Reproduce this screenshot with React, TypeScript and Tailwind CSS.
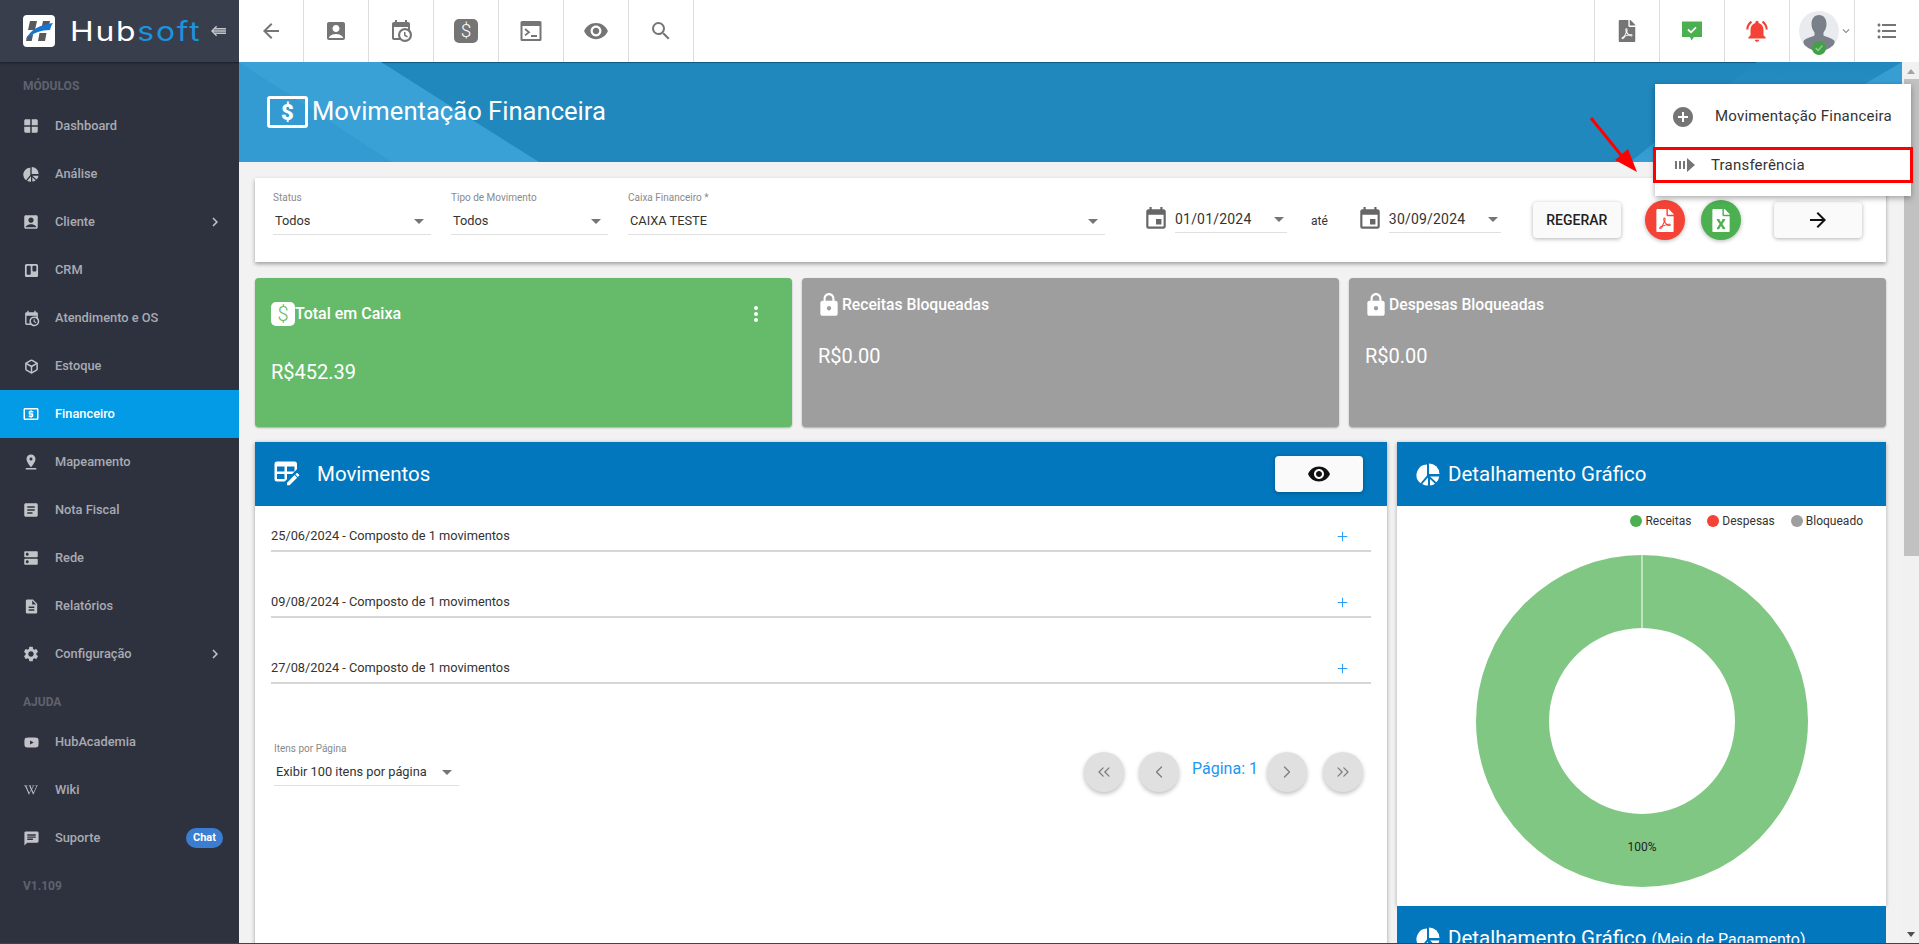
import { ChevronLeft, ChevronRight, ChevronsLeft, ChevronsRight, Plus, Box } from 'lucide-react';
import { FaTrello, FaYoutube, FaWikipediaW, FaFilePdf, FaFileExcel } from 'react-icons/fa';
import {
  MdWindow, MdAccountBox, MdLocalAtm, MdPinDrop, MdArticle, MdDns, MdDescription, MdSettings, MdChat,
  MdArrowBack, MdVisibility, MdSearch, MdNotificationsActive, MdFormatListBulleted, MdKeyboardArrowDown,
  MdChevronRight, MdEvent, MdLock, MdMoreVert, MdAddCircle, MdArrowForward,
} from 'react-icons/md';

const CalendarClock = ({ className }: { className?: string }) => (
  <svg viewBox="0 0 24 24" fill="currentColor" className={className}>
    <path d="M15,13H16.5V15.82L18.94,17.23L18.19,18.53L15,16.69V13M19,8H5V19H9.67C9.24,18.09 9,17.07 9,16A7,7 0 0,1 16,9C17.07,9 18.09,9.24 19,9.67V8M5,21C3.89,21 3,20.1 3,19V5C3,3.89 3.89,3 5,3H6V1H8V3H16V1H18V3H19A2,2 0 0,1 21,5V11.1C22.24,12.36 23,14.09 23,16A7,7 0 0,1 16,23C14.09,23 12.36,22.24 11.1,21H5M16,11.15A4.85,4.85 0 0,0 11.15,16C11.15,18.68 13.32,20.85 16,20.85A4.85,4.85 0 0,0 20.85,16C20.85,13.32 18.68,11.15 16,11.15Z" />
  </svg>
);

const TableEdit = ({ className }: { className?: string }) => (
  <svg viewBox="0 0 24 24" fill="currentColor" className={className}>
    <path d="M21.7,13.35L20.7,14.35L18.65,12.3L19.65,11.3C19.86,11.09 20.21,11.09 20.42,11.3L21.7,12.58C21.91,12.79 21.91,13.14 21.7,13.35M12,18.94L18.06,12.88L20.11,14.93L14.06,21H12V18.94M4,2H18A2,2 0 0,1 20,4V8.17L16.17,12H12V16.17L10.17,18H4A2,2 0 0,1 2,16V4A2,2 0 0,1 4,2M4,6V10H10V6H4M12,6V10H18V6H12M4,12V16H10V12H4Z" />
  </svg>
);

const TerminalIcon = () => (
  <svg viewBox="0 0 24 24" className="w-[24px] h-[24px] text-[#757575]">
    <path fill="currentColor" fillRule="evenodd" d="M3 2h18a1.5 1.5 0 0 1 1.5 1.5v17A1.5 1.5 0 0 1 21 22H3a1.5 1.5 0 0 1-1.5-1.5v-17A1.5 1.5 0 0 1 3 2zm.5 5v13h17V7h-17z" />
    <path d="M6 10l4 3.2-4 3.2M12 17h6" fill="none" stroke="currentColor" strokeWidth="1.8" />
  </svg>
);

const PieCut = ({ className }: { className?: string }) => (
  <svg viewBox="0 0 24 24" fill="currentColor" className={className}>
    <path d="M13 1.500a10.500 10.500 0 0 1 10.500 10.500H13z" />
    <path d="M11 2.500a10.500 10.500 0 0 0-6.500 18.700L11 13.500z" />
    <path d="M12 15.500l-5.800 6.500a10.500 10.500 0 0 0 5.800 1.500z" />
    <path d="M14 14.500h9.300a10.500 10.500 0 0 1-3 5.800z" />
    <path d="M14 17l5 4.700a10.500 10.500 0 0 1-5 1.700z" />
  </svg>
);

const Logo = () => (
  <svg viewBox="0 0 32 32" className="w-[32px] h-[32px] shrink-0">
    <rect width="32" height="32" rx="4" fill="#fff" />
    <path d="M7 6h7l-2 9H5zM4 21.500l6.200-2.500L8.700 26H3zM20 6h7l-1.500 7h-7zM16.500 18h7L22 26h-7z" fill="#58595b" />
    <path d="M3 24C8 14 17 10 30 8c-2 3-2.500 5-3 7C18 15 10 18 3 24z" fill="#1476d2" />
  </svg>
);

const NavItem = ({ icon, label, active, chevron, badge }: { icon: React.ReactNode; label: string; active?: boolean; chevron?: boolean; badge?: string }) => (
  <div className={`h-[48px] flex items-center pl-[21px] pr-[16px] text-[12.8px] font-medium ${active ? 'bg-[#039be5] text-white' : 'text-[#a9abb2]'}`}>
    <span className={`w-[20px] flex justify-center ${active ? 'text-white' : 'text-[#c2c3c8]'}`}>{icon}</span>
    <span className="ml-[14px] flex-1">{label}</span>
    {chevron && <MdChevronRight className="w-[18px] h-[18px] text-[#c2c3c8] mr-[-1px]" />}
    {badge && <span className="h-[20px] w-[37px] rounded-full bg-[#3b7dd0] text-white text-[11px] font-bold flex items-center justify-center">{badge}</span>}
  </div>
);

const SectionLabel = ({ children }: { children: string }) => (
  <div className="h-[40px] flex items-end pb-[7px] pl-[23px] text-[12px] font-bold text-[#5f626d]">{children}</div>
);

const Sidebar = () => (
  <aside className="w-[239px] shrink-0 bg-[#2e323f] flex flex-col">
    <div className="h-[62px] bg-[#393e4c] flex items-center pl-[23px] shadow-[0_1px_2px_rgba(0,0,0,0.4)]">
      <Logo />
      <span className="ml-[15px] origin-left scale-x-[1.18] text-[27px] leading-none font-normal tracking-[1.5px] [font-family:Inter,sans-serif] text-white">
        Hub<span className="text-[#1a94dc]">soft</span>
      </span>
      <svg viewBox="0 0 16 12" className="ml-[30px] w-[15px] h-[12px] text-[#c5c7cc]" fill="none" stroke="currentColor" strokeWidth="1.4">
        <path d="M6 1L1 6l5 5M3 3.6h13M1.5 6h14.5M3 8.4h13" />
      </svg>
    </div>
    <SectionLabel>MÓDULOS</SectionLabel>
    <NavItem icon={<MdWindow className="w-[18px] h-[18px]" />} label="Dashboard" />
    <NavItem icon={<PieCut className="w-[16px] h-[16px]" />} label="Análise" />
    <NavItem icon={<MdAccountBox className="w-[18px] h-[18px]" />} label="Cliente" chevron />
    <NavItem icon={<FaTrello className="w-[15px] h-[15px]" />} label="CRM" />
    <NavItem icon={<CalendarClock className="w-[17px] h-[17px]" />} label="Atendimento e OS" />
    <NavItem icon={<Box className="w-[15px] h-[15px]" strokeWidth={2.4} />} label="Estoque" />
    <NavItem icon={<MdLocalAtm className="w-[18px] h-[18px]" />} label="Financeiro" active />
    <NavItem icon={<MdPinDrop className="w-[18px] h-[18px]" />} label="Mapeamento" />
    <NavItem icon={<MdArticle className="w-[18px] h-[18px]" />} label="Nota Fiscal" />
    <NavItem icon={<MdDns className="w-[18px] h-[18px]" />} label="Rede" />
    <NavItem icon={<MdDescription className="w-[17px] h-[17px]" />} label="Relatórios" />
    <NavItem icon={<MdSettings className="w-[18px] h-[18px]" />} label="Configuração" chevron />
    <SectionLabel>AJUDA</SectionLabel>
    <NavItem icon={<FaYoutube className="w-[15px] h-[15px]" />} label="HubAcademia" />
    <NavItem icon={<FaWikipediaW className="w-[14px] h-[14px]" />} label="Wiki" />
    <NavItem icon={<MdChat className="w-[17px] h-[17px]" />} label="Suporte" badge="Chat" />
    <div className="mt-[15px] pl-[23px] text-[12px] font-bold text-[#5f626d]">V1.109</div>
  </aside>
);

const Cell = ({ children, right }: { children: React.ReactNode; right?: boolean }) => (
  <div className={`w-[65px] h-full flex items-center justify-center border-[#dddddd] text-[#757575] ${right ? 'border-l' : 'border-r'}`}>
    {children}
  </div>
);

const Topbar = () => (
  <header className="h-[62px] bg-white flex justify-between shrink-0">
    <div className="flex h-full">
      <Cell><MdArrowBack className="w-[24px] h-[24px]" /></Cell>
      <Cell><MdAccountBox className="w-[24px] h-[24px]" /></Cell>
      <Cell><CalendarClock className="w-[24px] h-[24px]" /></Cell>
      <Cell>
        <span className="w-[24px] h-[24px] rounded-[5px] bg-[#757575] text-white text-[19px] font-light flex items-center justify-center">$</span>
      </Cell>
      <Cell><TerminalIcon /></Cell>
      <Cell><MdVisibility className="w-[26px] h-[26px]" /></Cell>
      <Cell><MdSearch className="w-[24px] h-[24px]" /></Cell>
    </div>
    <div className="flex h-full">
      <Cell right><FaFilePdf className="w-[18px] h-[22px]" /></Cell>
      <Cell right>
        <svg viewBox="0 0 22 22" className="w-[22px] h-[22px]">
          <path d="M1 1.5h20v15.5h-8l-2.5 3.5-1.5-3.500H1z" fill="#4caf50" />
          <path d="M7 9.500l3 2.800 5-5" fill="none" stroke="#fff" strokeWidth="1.800" />
        </svg>
      </Cell>
      <Cell right><MdNotificationsActive className="w-[26px] h-[26px] text-[#f44336]" /></Cell>
      <Cell right>
        <div className="relative flex items-center ml-[8px]">
          <div className="relative w-[40px] h-[40px] rounded-full bg-[#e9ebee] overflow-hidden">
            <svg viewBox="0 0 40 40" className="w-[40px] h-[40px]">
              <path d="M20 4c5 0 7.500 4 7.500 9 0 3-1 6-3 8.500v3c4 2 9 2.500 11 5.500v11H4.500V30c2-3 7-3.500 11-5.500v-3c-2-2.500-3-5.500-3-8.500 0-5 2.500-9 7.500-9z" fill="#7a808a" />
            </svg>
          </div>
          <span className="absolute left-[13px] top-[30px] w-[14px] h-[14px] rounded-full bg-[#43a047] flex items-center justify-center">
            <svg viewBox="0 0 12 12" className="w-[10px] h-[10px]"><path d="M2 6l3 3 5-6" fill="none" stroke="#8fcf92" strokeWidth="1.500" /></svg>
          </span>
          <MdKeyboardArrowDown className="w-[14px] h-[14px] text-[#888]" />
        </div>
      </Cell>
      <Cell right><MdFormatListBulleted className="w-[24px] h-[24px]" /></Cell>
    </div>
  </header>
);

const Banner = () => (
  <div className="relative h-[100px] bg-[#2088bd] overflow-hidden flex items-center pl-[28px] shadow-[inset_0_1px_1px_rgba(0,40,70,0.5)]">
    <svg viewBox="0 0 1663 100" preserveAspectRatio="none" className="absolute inset-0 w-full h-full">
      <defs>
        <linearGradient id="bandFade" x1="0" y1="0" x2="0" y2="1">
          <stop offset="0" stopColor="#2088bd" />
          <stop offset="1" stopColor="#379ed4" />
        </linearGradient>
      </defs>
      <polygon points="0,0 142,0 300,100 0,100" fill="#39a1d6" />
      <polygon points="0,0 153,100 0,100" fill="#339bd1" />
      <polygon points="1391,100 1518,0 1663,0 1663,100" fill="url(#bandFade)" />
      <polygon points="1493,100 1663,0 1663,100" fill="#379ed4" />
    </svg>
    <span className="relative w-[41px] h-[32px] rounded-[3px] border-[3px] border-white text-white text-[22px] font-black flex items-center justify-center">$</span>
    <h1 className="relative ml-[4px] mb-[2px] text-[25.6px] text-white">Movimentação Financeira</h1>
  </div>
);

const SelectField = ({ label, value, width, className }: { label: string; value: string; width: string; className?: string }) => (
  <div className={`flex flex-col ${width} ${className ?? ''}`}>
    <span className="h-[12px] text-[10px] leading-[12px] text-[#8a8a8a]">{label}</span>
    <div className="h-[31px] pt-[4px] flex items-center justify-between pl-[2px] pr-[7px] border-b border-[#e0e0e0] text-[12.8px] text-[#333]">
      <span>{value}</span>
      <span className="w-0 h-0 border-x-[5px] border-x-transparent border-t-[5px] border-t-[#757575]" />
    </div>
  </div>
);

const DateField = ({ value }: { value: string }) => (
  <div className="flex items-start mt-[14px]">
    <MdEvent className="w-[26px] h-[26px] text-[#666]" />
    <div className="ml-[6px] w-[112px] h-[27px] flex items-center justify-between pr-[3px] border-b border-[#e0e0e0] text-[14px] tracking-[0.2px] text-[#333]">
      <span>{value}</span>
      <span className="w-0 h-0 border-x-[5px] border-x-transparent border-t-[5px] border-t-[#757575]" />
    </div>
  </div>
);

const FilterCard = () => (
  <section className="h-[84px] bg-white shadow-[0_2px_4px_rgba(0,0,0,0.35)] pt-[14px] pl-[18px] flex items-start">
    <SelectField label="Status" value="Todos" width="w-[158px]" />
    <SelectField label="Tipo de Movimento" value="Todos" width="w-[157px]" className="ml-[20px]" />
    <SelectField label="Caixa Financeiro *" value="CAIXA TESTE" width="w-[477px]" className="ml-[20px]" />
    <div className="ml-[38px]"><DateField value="01/01/2024" /></div>
    <span className="ml-[24px] mt-[20px] text-[12px] text-[#333]">até</span>
    <div className="ml-[29px]"><DateField value="30/09/2024" /></div>
    <button className="ml-[32px] mt-[10px] w-[88px] h-[36px] rounded-[4px] bg-[#fafafa] shadow-[0_1px_4px_rgba(0,0,0,0.3)] text-[14px] font-medium text-[#222]">REGERAR</button>
    <span className="ml-[24px] mt-[8px] w-[40px] h-[40px] rounded-full bg-[#f44336] text-white flex items-center justify-center shadow-[0_1px_4px_rgba(0,0,0,0.3)]">
      <FaFilePdf className="w-[18px] h-[23px]" />
    </span>
    <span className="ml-[16px] mt-[8px] w-[40px] h-[40px] rounded-full bg-[#4caf50] text-white flex items-center justify-center shadow-[0_1px_4px_rgba(0,0,0,0.3)]">
      <FaFileExcel className="w-[18px] h-[23px]" />
    </span>
    <button className="ml-[33px] mt-[10px] w-[88px] h-[36px] rounded-[4px] bg-[#fafafa] shadow-[0_1px_4px_rgba(0,0,0,0.3)] flex items-center justify-center text-[#111]">
      <MdArrowForward className="w-[24px] h-[24px]" />
    </button>
  </section>
);

const TotalCard = () => (
  <div className="h-[149px] rounded-[4px] bg-[#66bb6a] shadow-[0_1px_2px_rgba(0,0,0,0.3)] pt-[24px] pl-[16px] pr-[24px] text-white">
    <div className="flex items-center h-[24px]">
      <span className="w-[24px] h-[24px] rounded-[5px] bg-white text-[#66bb6a] text-[20px] font-light flex items-center justify-center">$</span>
      <span className="flex-1 text-[16px] font-medium leading-[22px]">Total em Caixa</span>
      <MdMoreVert className="w-[24px] h-[24px]" />
    </div>
    <div className="mt-[34px] text-[20px] leading-[24px]">R$452.39</div>
  </div>
);

const LockedCard = ({ title }: { title: string }) => (
  <div className="h-[149px] rounded-[4px] bg-[#9e9e9e] shadow-[0_1px_2px_rgba(0,0,0,0.3)] pt-[15px] pl-[16px] text-white">
    <div className="flex items-center h-[24px]">
      <MdLock className="w-[26px] h-[26px] ml-[-2px]" />
      <span className="text-[15.7px] font-medium">{title}</span>
    </div>
    <div className="mt-[27px] text-[20px] leading-[24px]">R$0.00</div>
  </div>
);

const PanelHeader = ({ children }: { children: React.ReactNode }) => (
  <div className="h-[64px] bg-[#0277bd] text-white flex items-center pl-[18px] pr-[24px] shrink-0">{children}</div>
);

const MoveRow = ({ text }: { text: string }) => (
  <div className="h-[32px] pt-[2px] mb-[34px] border-b-2 border-[#d6d6d6] flex items-center justify-between pr-[21px] text-[12.8px] text-[#333]">
    <span>{text}</span>
    <Plus className="w-[15px] h-[15px] text-[#2196f3]" strokeWidth={1.5} />
  </div>
);

const PageButton = ({ icon, className }: { icon: React.ReactNode; className?: string }) => (
  <span className={`w-[40px] h-[40px] rounded-full bg-[#e0e0e0] text-[#7c7c7c] flex items-center justify-center shadow-[0_2px_4px_rgba(0,0,0,0.25)] ${className ?? ''}`}>{icon}</span>
);

const MovementsPanel = () => (
  <section className="w-[1132px] h-[640px] bg-white shadow-[0_1px_4px_rgba(0,0,0,0.35)]">
    <PanelHeader>
      <TableEdit className="w-[30px] h-[30px] ml-[-1px]" />
      <h2 className="ml-[15px] text-[20.5px] flex-1">Movimentos</h2>
      <button className="w-[88px] h-[36px] rounded-[4px] bg-[#fafafa] shadow-[0_1px_4px_rgba(0,0,0,0.3)] flex items-center justify-center text-[#111]">
        <MdVisibility className="w-[24px] h-[24px]" />
      </button>
    </PanelHeader>
    <div className="pt-[14px] pl-[16px] pr-[16px]">
      <MoveRow text="25/06/2024 - Composto de 1 movimentos" />
      <MoveRow text="09/08/2024 - Composto de 1 movimentos" />
      <MoveRow text="27/08/2024 - Composto de 1 movimentos" />
    </div>
    <div className="mt-[59px] pl-[19px] pr-[24px] flex items-start justify-between">
      <SelectField label="Itens por Página" value="Exibir 100 itens por página" width="w-[185px]" />
      <div className="mt-[9px] flex items-center">
        <PageButton icon={<ChevronsLeft className="w-[20px] h-[20px]" strokeWidth={1.5} />} />
        <PageButton className="ml-[15px]" icon={<ChevronLeft className="w-[20px] h-[20px]" strokeWidth={1.5} />} />
        <span className="ml-[13px] mr-[9px] mb-[6px] text-[16px] text-[#2196f3]">Página: 1</span>
        <PageButton icon={<ChevronRight className="w-[20px] h-[20px]" strokeWidth={1.5} />} />
        <PageButton className="ml-[16px]" icon={<ChevronsRight className="w-[20px] h-[20px]" strokeWidth={1.5} />} />
      </div>
    </div>
  </section>
);

const LegendItem = ({ color, label }: { color: string; label: string }) => (
  <span className="flex items-center gap-[3px] text-[12px] text-[#333]">
    <span className={`w-[12px] h-[12px] rounded-full ${color}`} />
    {label}
  </span>
);

const ChartPanel = () => (
  <div className="flex-1 flex flex-col">
    <section className="h-[464px] bg-white shadow-[0_1px_4px_rgba(0,0,0,0.3)]">
      <PanelHeader>
        <PieCut className="w-[24px] h-[24px] ml-[1px]" />
        <h2 className="ml-[8px] text-[20.5px]">Detalhamento Gráfico</h2>
      </PanelHeader>
      <div className="pt-[6px] pr-[23px] h-[24px] flex justify-end gap-[16px]">
        <LegendItem color="bg-[#4caf50]" label="Receitas" />
        <LegendItem color="bg-[#f44336]" label="Despesas" />
        <LegendItem color="bg-[#9e9e9e]" label="Bloqueado" />
      </div>
      <svg viewBox="0 0 332 332" className="mt-[25px] mx-auto w-[332px] h-[332px]">
        <circle cx="166" cy="166" r="129.5" fill="none" stroke="#81c784" strokeWidth="73" />
        <line x1="166" y1="0" x2="166" y2="73" stroke="#fff" strokeWidth="1" />
        <text x="166" y="296" textAnchor="middle" fontSize="12" fill="#222" fontFamily="Roboto, sans-serif">100%</text>
      </svg>
    </section>
    <section className="bg-white">
      <PanelHeader>
        <PieCut className="w-[24px] h-[24px] ml-[1px]" />
        <h2 className="ml-[8px] text-[20.5px]">
          Detalhamento Gráfico <span className="text-[16px]">(Meio de Pagamento)</span>
        </h2>
      </PanelHeader>
    </section>
  </div>
);

const ActionMenu = () => (
  <div className="absolute left-[1655px] top-[84px] w-[256px] h-[112px] bg-white shadow-[0_2px_6px_rgba(0,0,0,0.35)] text-[15px] text-[#333]">
    <div className="pt-[21px] h-[63px] flex items-start pl-[16px]">
      <MdAddCircle className="w-[24px] h-[24px] text-[#757575]" />
      <span className="ml-[20px] tracking-[0.2px]">Movimentação Financeira</span>
    </div>
    <div className="mx-[-2px] h-[36px] border-[3px] border-[#ff0000] flex items-center pl-[19px]">
      <svg viewBox="0 0 20 14" className="w-[20px] h-[14px] text-[#757575]" fill="currentColor">
        <path d="M0 3h2v8H0zM4 3h2v8H4zM8 3h2v8H8zM12 0l8 7-8 7z" />
      </svg>
      <span className="ml-[16px] tracking-[0.2px]">Transferência</span>
    </div>
  </div>
);

const PageScrollbar = () => (
  <div className="w-[17px] shrink-0 bg-[#f1f1f1] flex flex-col items-center">
    <span className="mt-[7px] w-0 h-0 border-x-[4px] border-x-transparent border-b-[5px] border-b-[#a3a3a3]" />
    <span className="mt-[5px] w-[15px] ml-[1px] h-[477px] bg-[#c1c1c1]" />
    <span className="mt-auto mb-[6px] w-0 h-0 border-x-[4px] border-x-transparent border-t-[5px] border-t-[#505050]" />
  </div>
);

export default function App() {
  return (
    <div className="relative w-[1919px] h-[944px] overflow-hidden flex flex-col [font-family:Roboto,sans-serif] bg-[#f2f2f2]">
      <div className="flex flex-1 min-h-0">
        <Sidebar />
        <div className="flex-1 min-w-0 flex flex-col">
          <Topbar />
          <div className="flex flex-1 min-h-0">
            <main className="flex-1 min-w-0 overflow-hidden">
              <Banner />
              <div className="px-[16px] pt-[16px]">
                <FilterCard />
                <div className="mt-[16px] grid grid-cols-3 gap-[10px]">
                  <TotalCard />
                  <LockedCard title="Receitas Bloqueadas" />
                  <LockedCard title="Despesas Bloqueadas" />
                </div>
                <div className="mt-[15px] flex gap-[10px]">
                  <MovementsPanel />
                  <ChartPanel />
                </div>
              </div>
            </main>
            <PageScrollbar />
          </div>
        </div>
      </div>
      <div className="h-[1px] bg-[#37474f] shrink-0" />
      <ActionMenu />
      <svg viewBox="0 0 60 70" className="absolute left-[1585px] top-[112px] w-[60px] h-[70px]">
        <path d="M6 6L40 48" stroke="#f00" strokeWidth="3" fill="none" />
        <path d="M52 60L30 48L43 37z" fill="#f00" />
      </svg>
    </div>
  );
}
